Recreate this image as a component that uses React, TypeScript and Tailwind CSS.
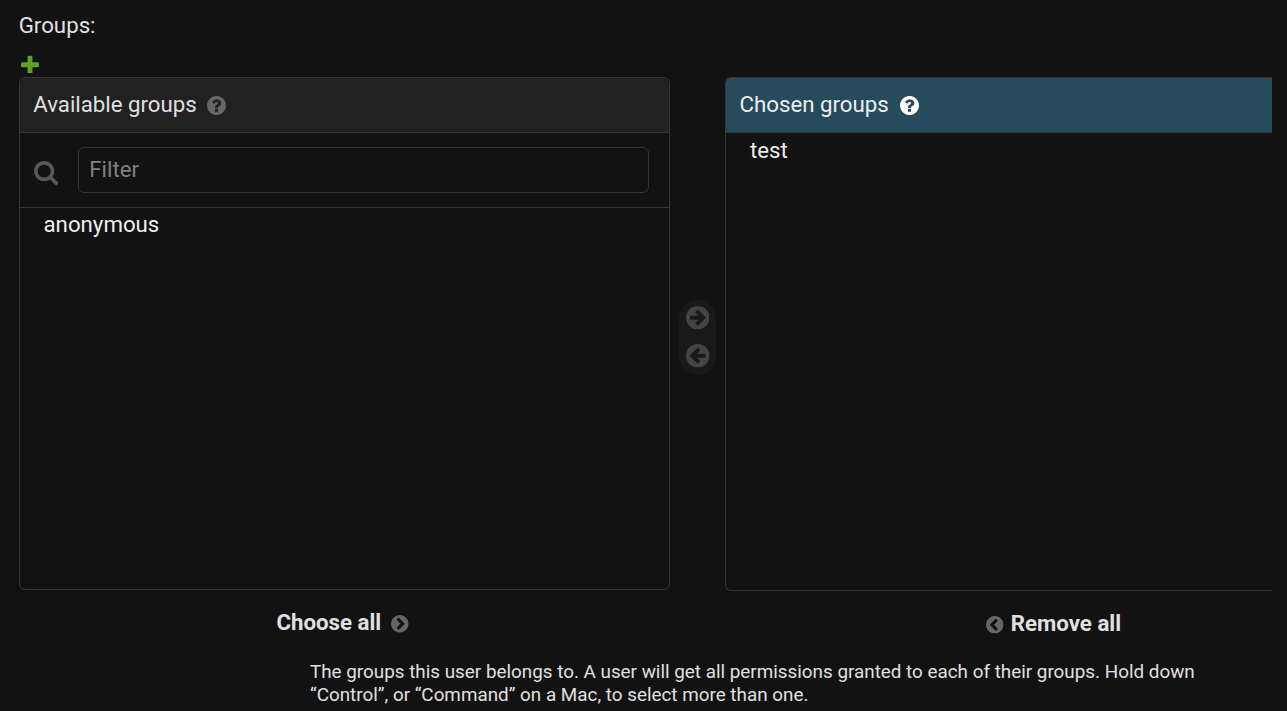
const DISC =
  'M1664 896q0 209-103 385.5t-279.5 279.5-385.5 103-385.5-103-279.5-279.5-103-385.5 103-385.5 279.5-279.5 385.5-103 385.5 103 279.5 279.5 103 385.5z';

const PLUS =
  'M1600 796v192q0 40-28 68t-68 28h-416v416q0 40-28 68t-68 28h-192q-40 0-68-28t-28-68v-416h-416q-40 0-68-28t-28-68v-192q0-40 28-68t68-28h416v-416q0-40 28-68t68-28h192q40 0 68 28t28 68v416h416q40 0 68 28t28 68z';
const SEARCH =
  'M1216 832q0-185-131.5-316.5t-316.5-131.5-316.5 131.5-131.5 316.5 131.5 316.5 316.5 131.5 316.5-131.5 131.5-316.5zm512 832q0 52-38 90t-90 38q-54 0-90-38l-343-342q-179 124-399 124-143 0-273.5-55.5t-225-150-150-225-55.5-273.5 55.5-273.5 150-225 225-150 273.5-55.5 273.5 55.5 225 150 150 225 55.5 273.5q0 220-124 399l343 343q37 37 37 90z';
const QUESTION =
  'M1024 1376v-192q0-14-9-23t-23-9h-192q-14 0-23 9t-9 23v192q0 14 9 23t23 9h192q14 0 23-9t9-23zm256-672q0-88-55.5-163t-138.5-116-170-41q-243 0-371 213-15 24 8 42l132 100q7 6 19 6 16 0 25-12 53-68 86-92 34-24 86-24 48 0 85.5 26t37.5 59q0 38-20 61t-68 45q-63 28-115.5 86.5t-52.5 125.5v36q0 14 9 23t23 9h192q14 0 23-9t9-23q0-19 21.5-49.5t54.5-49.5q32-18 49-28.5t46-35 44.5-48 28-60.5 12.5-81z' +
  DISC;
const ARROW =
  'M1413 896q0-27-18-45l-362-362-91-91q-18-18-45-18t-45 18l-91 91q-18 18-18 45t18 45l189 189h-502q-26 0-45 19t-19 45v128q0 26 19 45t45 19h502l-189 189q-19 19-19 45t19 45l91 91q18 18 45 18t45-18l362-362 91-91q18-18 18-45z' +
  DISC;
const CHEVRON =
  'M845 1395l454-454q19-19 19-45t-19-45l-454-454q-19-19-45-19t-45 19l-102 102q-19 19-19 45t19 45l307 307-307 307q-19 19-19 45t19 45l102 102q19 19 45 19t45-19z' +
  DISC;

type IconProps = { d: string; className: string; viewBox?: string };

function Icon({ d, className, viewBox = '128 128 1536 1536' }: IconProps) {
  return (
    <svg viewBox={viewBox} className={`shrink-0 fill-current ${className}`} aria-hidden="true">
      <path fillRule="evenodd" d={d} />
    </svg>
  );
}

export default function App() {
  return (
    <main className="h-[711px] w-[1287px] overflow-hidden bg-[#121212] pt-[10px] pl-[19px] font-['Roboto',sans-serif] text-[22.25px] leading-[30px] text-[#e0e0e0]">
      <div className="-ml-[0.3px]">Groups:</div>
      <button className="mt-[15px] block h-[18px] pl-[2px] text-[#5fa225]" aria-label="Add group">
        <Icon d={PLUS} viewBox="192 128 1408 1408" className="size-[18px]" />
      </button>

      <div className="mt-[4px] flex items-start">
        <section className="w-[651px]">
          <div className="h-[513px] overflow-hidden rounded-[6px] border border-[#353535]">
            <h2 className="flex h-[55px] items-center border-b border-[#353535] bg-[#212121] pb-[2px] pl-[13.2px]">
              Available groups
              <Icon d={QUESTION} className="mt-[2px] ml-[10.3px] size-[19px] text-[#666666]" />
            </h2>
            <div className="flex h-[75px] items-start border-b border-[#353535] pt-[14px] pl-[14px]">
              <Icon d={SEARCH} viewBox="64 128 1664 1664" className="mt-[14px] size-[24px] text-[#585858]" />
              <input
                placeholder="Filter"
                className="ml-[20px] h-[46px] w-[571px] rounded-[6px] border border-[#353535] bg-[#121212] px-[10.3px] pb-[2px] outline-none placeholder:text-[#808080]"
              />
            </div>
            <ul>
              <li className="pt-px pl-[23.5px] text-[#eeeeee]">anonymous</li>
            </ul>
          </div>
          <button className="mt-[17px] ml-[257.4px] flex items-center font-bold">
            Choose all
            <Icon d={CHEVRON} className="mt-[4px] ml-[10px] size-[17.5px] text-[#666666]" />
          </button>
        </section>

        <div className="mt-[222.5px] ml-[9px] flex h-[75px] w-[37px] flex-col items-center gap-[15px] rounded-full bg-[#191919] pt-[6px] text-[#444444]">
          <Icon d={ARROW} className="size-[23.5px]" />
          <Icon d={ARROW} className="size-[23.5px] rotate-180" />
        </div>

        <section className="ml-[9px] w-[547px]">
          <div className="h-[514px] overflow-hidden rounded-l-[6px] border-y border-l border-[#353535]">
            <h2 className="flex h-[55px] items-center border-b border-[#353535] bg-[#264b5d] pb-[2px] pl-[13.5px] text-[#eeeeee]">
              Chosen groups
              <Icon d={QUESTION} className="mt-[2px] ml-[10.8px] size-[19px] text-white" />
            </h2>
            <ul>
              <li className="pt-[2px] pl-[24px] text-[#eeeeee]">test</li>
            </ul>
          </div>
          <button className="mt-[17px] ml-[261.3px] flex items-center font-bold">
            <Icon d={CHEVRON} className="mt-[4px] mr-[7px] size-[17.5px] rotate-180 text-[#666666]" />
            Remove all
          </button>
        </section>
      </div>

      <p className="mt-[23px] ml-[291px] w-[920px] text-[18.85px] leading-[23px]">
        The groups this user belongs to. A user will get all permissions granted to each of their groups. Hold down
        “Control”, or “Command” on a Mac, to select more than one.
      </p>
    </main>
  );
}
